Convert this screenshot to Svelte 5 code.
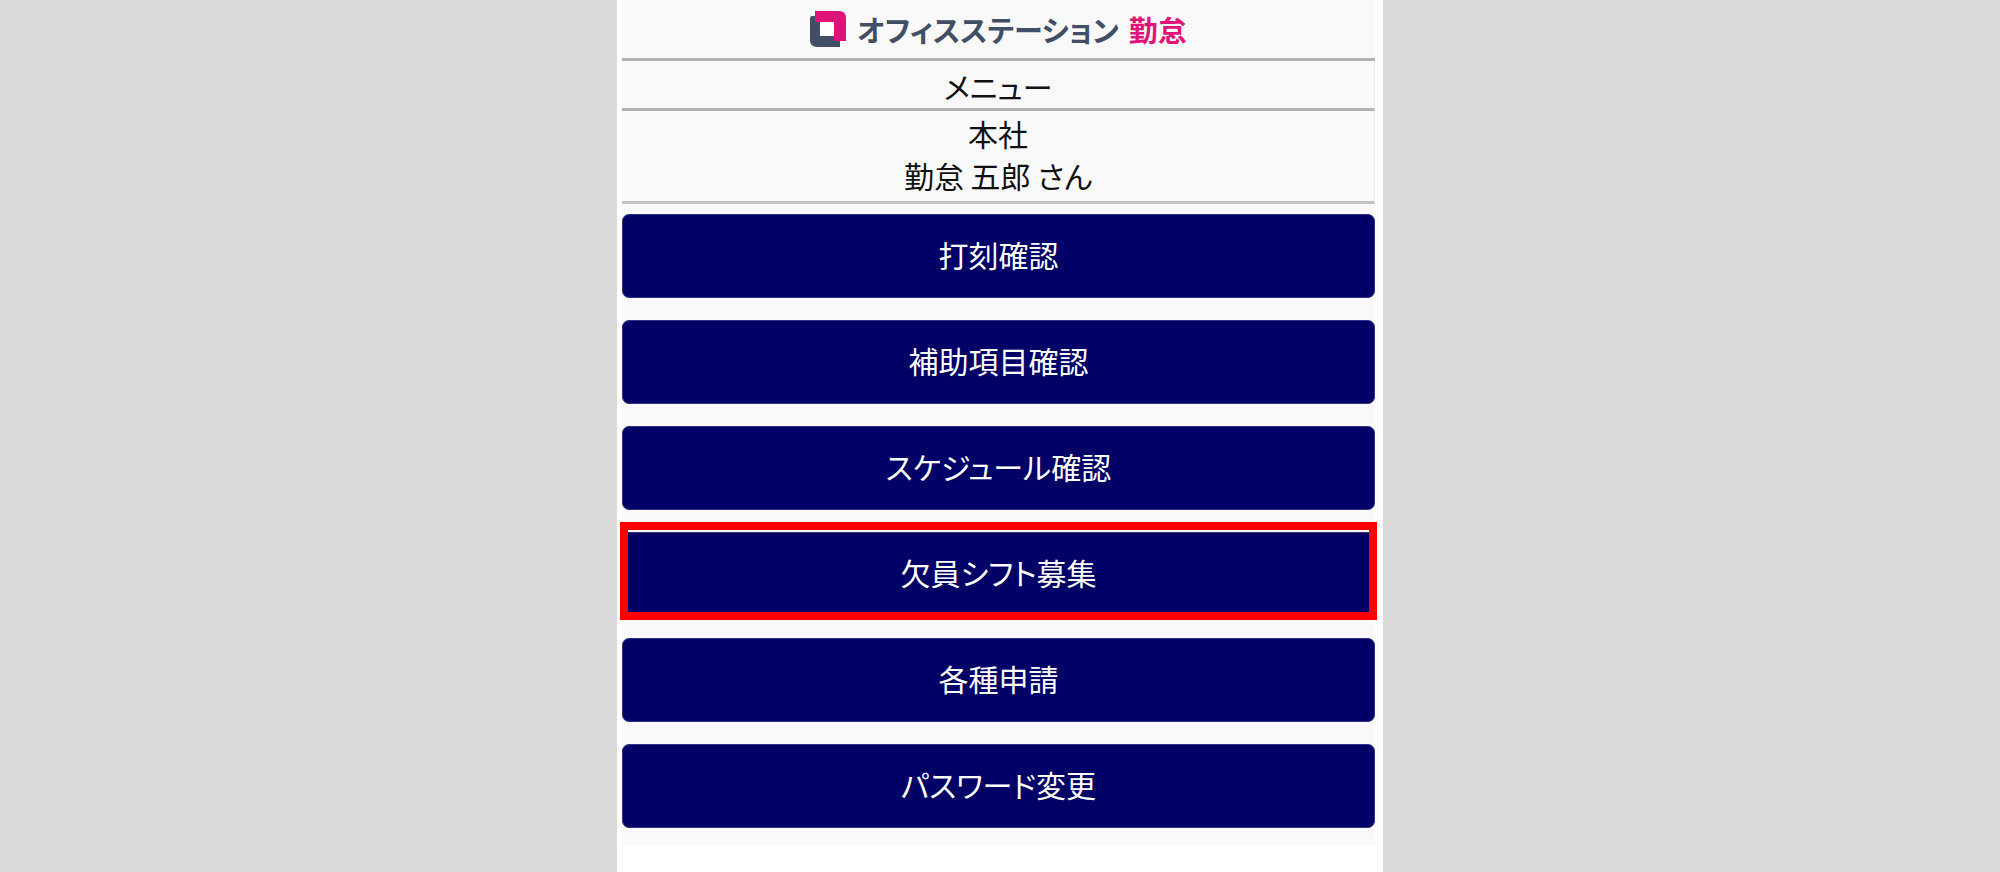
<script lang="ts">
  interface MenuItem {
    label: string
    highlighted?: boolean
  }

  const office = '本社'
  const userName = '勤怠 五郎'

  const items: MenuItem[] = [
    { label: '打刻確認' },
    { label: '補助項目確認' },
    { label: 'スケジュール確認' },
    { label: '欠員シフト募集', highlighted: true },
    { label: '各種申請' },
    { label: 'パスワード変更' },
  ]
</script>

<div class="sheet">
  <div class="page">
    <header class="brand">
      <svg class="mark" viewBox="0 0 36 36" aria-hidden="true">
        <path d="M5 5H2Q0 5 0 8V29Q0 36 7 36H30V30H24V24H11V11H5Z" fill="#414e66" />
        <path d="M5 0H29Q36 0 36 7V30H24V11H5Z" fill="#e0137b" />
        <path d="M10 11H24V25H10Z" fill="#fff" />
      </svg>
      <span class="brand-name">オフィスステーション</span>
      <span class="product">勤怠</span>
    </header>

    <h1 class="title">メニュー</h1>

    <div class="user">
      <div>{office}</div>
      <div>{userName} さん</div>
    </div>

    <nav class="menu">
      {#each items as item}
        <div class="item" class:highlighted={item.highlighted}>
          <button type="button">{item.label}</button>
        </div>
      {/each}
    </nav>
  </div>
</div>

<style>
  :global(body) {
    margin: 0;
    background: #d9d9d9;
  }

  .sheet {
    box-sizing: border-box;
    max-width: 766px;
    min-height: 100vh;
    margin: 0 auto;
    padding: 0 8px 0 5px;
    background: #fff;
    color: #111;
    font-family: 'Noto Sans CJK JP', sans-serif;
    font-size: 30px;
    font-feature-settings: 'palt';
    line-height: 42px;
  }

  .page {
    background: #f9f9f9;
  }

  .brand {
    display: flex;
    align-items: center;
    justify-content: center;
    height: 58px;
    border-bottom: 3px solid #b3b3b3;
    font-size: 29px;
    font-weight: 700;
  }

  .mark {
    width: 36px;
    height: 36px;
    margin-right: 11px;
  }

  .brand-name {
    margin-right: 10px;
    color: #414e66;
  }

  .product { color: #e0137b; }

  .title {
    margin: 0;
    padding: 4px 0 1px;
    border-right: 1px solid #eee;
    border-bottom: 3px solid #b3b3b3;
    font-size: 30px;
    font-weight: 400;
    text-align: center;
  }

  .user {
    padding: 1px 0 5px;
    border-right: 1px solid #eee;
    border-bottom: 3px solid #c4c4c4;
    text-align: center;
  }

  .menu {
    display: flex;
    flex-direction: column;
    gap: 22px;
    padding: 10px 0 17px;
  }

  .item {
    position: relative;
  }

  button {
    display: block;
    width: 100%;
    height: 84px;
    padding: 0 0 4px;
    border: 1px solid #33337f;
    border-radius: 7px;
    background: #000066;
    color: #fff;
    font: inherit;
    font-feature-settings: inherit;
    cursor: pointer;
  }

  .highlighted::after {
    content: '';
    position: absolute;
    inset: -10px -2px -4px -2px;
    border: 8px solid #f00;
    pointer-events: none;
  }
</style>
